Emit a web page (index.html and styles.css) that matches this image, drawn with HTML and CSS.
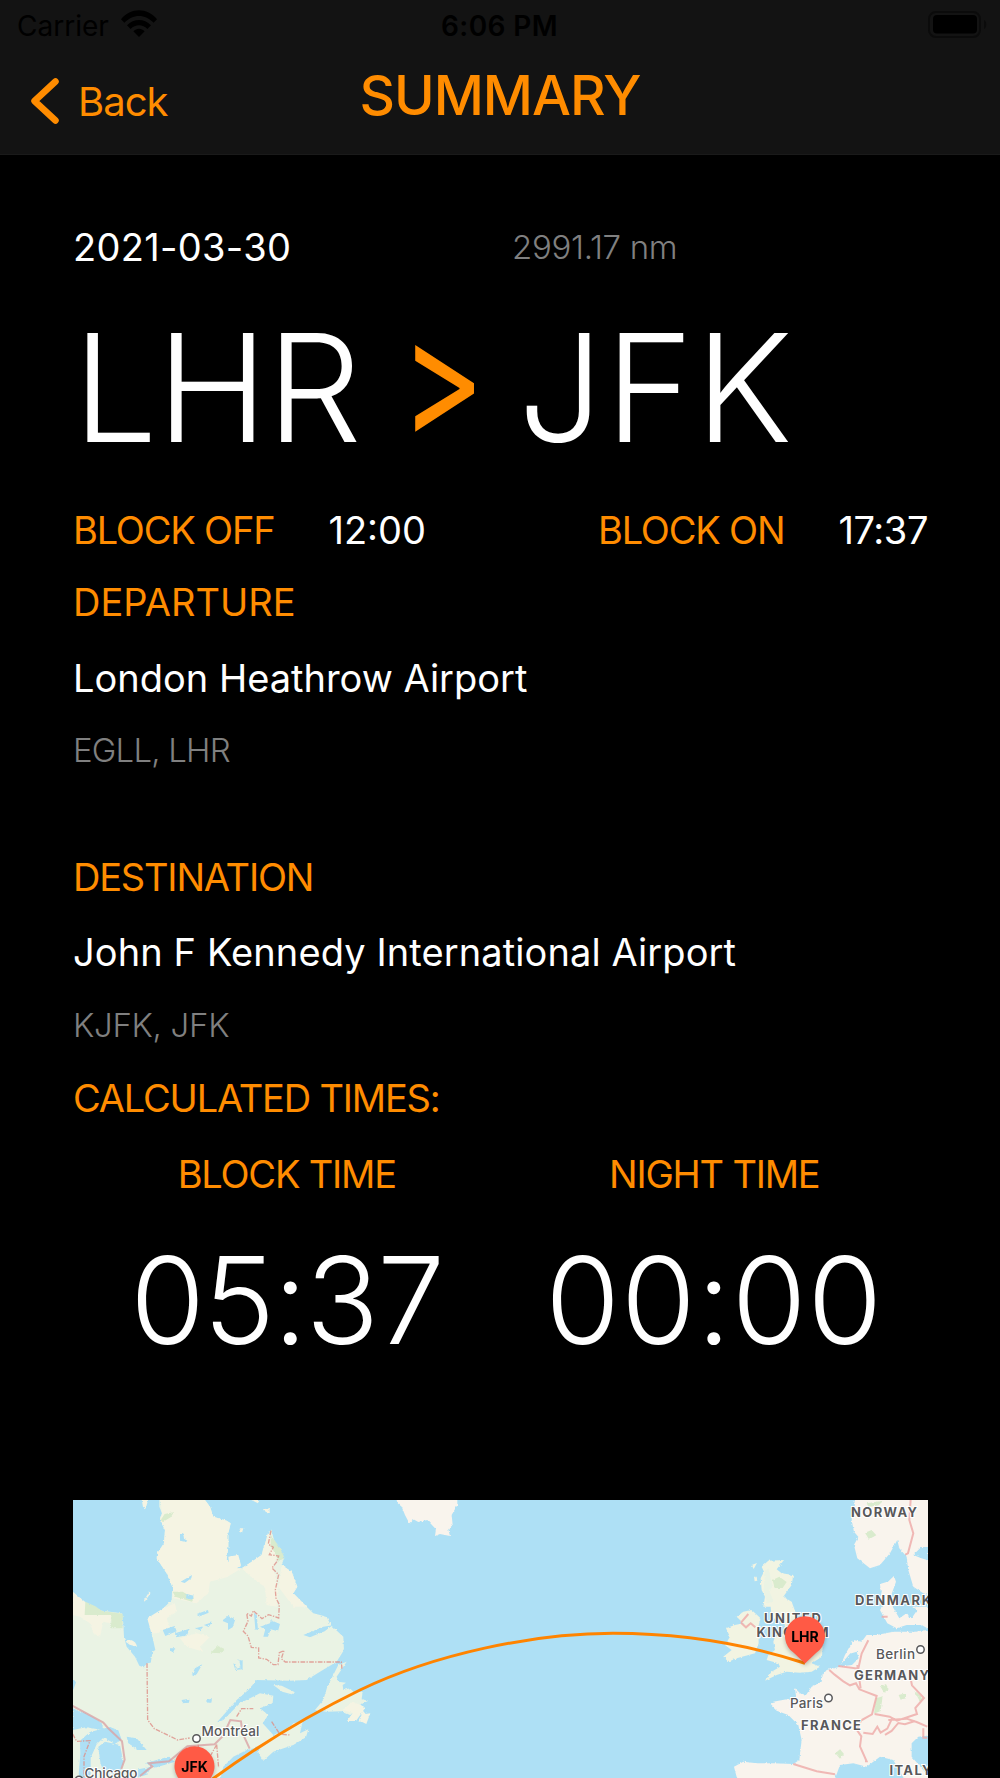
FILE: index.html
```html
<!DOCTYPE html>
<html lang="en">

<head>
  <meta charset="utf-8">
  <title>Summary</title>
  <link rel="stylesheet" href="styles.css">
</head>

<body>
  <header class="top">
    <div class="status">
      <div class="carrier">
        <span>Carrier</span>
        <svg width="36" height="27" viewBox="0 0 36 27">
          <path d="M0 9.2C10-2.6 26-2.6 36 9.2l-3.4 3.6C24.500 3.600 11.500 3.600 3.400 12.800z" />
          <path d="M6 15.300c6.800-7.200 17.200-7.200 24 0l-3.600 3.700c-4.800-5-12-5-16.800 0z" />
          <path d="M12.300 21.300c3.300-3.400 8.100-3.400 11.400 0L18 27z" />
        </svg>
      </div>
      <div class="clock">6:06 PM</div>
      <svg class="battery" width="54" height="27" viewBox="0 0 54 27">
        <rect class="shell" x="1" y="1" width="51" height="25" rx="7" />
        <rect x="5" y="4" width="44" height="18.500" rx="4" />
        <path class="cap" d="M56 9v9c3-1.500 3-7.500 0-9z" />
      </svg>
    </div>
    <div class="nav">
      <div class="back">
        <svg width="28" height="46" viewBox="0 0 28 46">
          <path d="M24.500 3.500L3.500 23l21 19.500" />
        </svg>
        <span>Back</span>
      </div>
      <h1 class="title">SUMMARY</h1>
    </div>
  </header>

  <main class="content">
    <div class="row date-row">
      <div class="value date">2021-03-30</div>
      <div class="muted distance">2991.17 nm</div>
    </div>

    <div class="route">
      <span class="from">LHR</span>
      <span class="arrow">&gt;</span>
      <span class="to">JFK</span>
    </div>

    <div class="row block-row">
      <div class="pair">
        <span class="label tight">BLOCK OFF</span>
        <span class="value">12:00</span>
      </div>
      <div class="pair">
        <span class="label tight">BLOCK ON</span>
        <span class="value block-on">17:37</span>
      </div>
    </div>

    <section class="airport departure">
      <h2 class="label">DEPARTURE</h2>
      <p class="value">London Heathrow Airport</p>
      <p class="muted egll">EGLL, LHR</p>
    </section>

    <section class="airport destination">
      <h2 class="label tight">DESTINATION</h2>
      <p class="value kennedy">John F Kennedy International Airport</p>
      <p class="muted">KJFK, JFK</p>
    </section>

    <h2 class="label tight calculated">CALCULATED TIMES:</h2>
    <div class="times">
      <div class="time">
        <h3 class="label tight">BLOCK TIME</h3>
        <div class="big">05:37</div>
      </div>
      <div class="time">
        <h3 class="label tight">NIGHT TIME</h3>
        <div class="big zero">00:00</div>
      </div>
    </div>

    <svg class="map" width="855" height="278" viewBox="0 0 855 278">
      <defs>
        <filter id="coast" x="0" y="0" width="100%" height="100%">
          <feTurbulence type="fractalNoise" baseFrequency="0.12" numOctaves="3" seed="4" />
          <feDisplacementMap in="SourceGraphic" scale="8" xChannelSelector="R" yChannelSelector="G" />
        </filter>
      </defs>

      <!-- North America -->
      <g transform="translate(-13 -10) scale(.3333)">
        <g filter="url(#coast)">
          <path class="forest" d="M20 290L38 305 60 330 100 350 125 362 185 370 190 400 192 440 200 470 225 500 238 527 250 532 262 520 272 518 278 485 286 480 275 430 270 405 262 385 285 375 310 355 335 330 337 290 320 250 290 205 292 190 312 160 315 120 300 90 306 70 298 50V10H420L450 50 460 80 500 92 512 100 505 130 505 170 500 210 525 235 545 235 570 220 605 195 612 165 625 155 625 125 635 122 642 150 672 205 665 225 695 245 712 290 700 310 740 350 760 370 800 380 812 405 850 440 852 480 830 515 780 545 740 570 690 572 590 570 565 600 530 630 470 698 490 690 540 640 600 610 640 617 638 640 600 655 625 675 608 700 640 735 680 722 700 700 728 695 720 730 745 718 738 742 700 765 640 785 610 812 595 790 600 770 560 780 520 800 490 830 478 880H20z" />
          <path class="cream" d="M298 10H420L450 50 460 80 500 92 512 100 505 130 505 170 500 210 525 235 545 235 500 262 450 275 445 310 410 340 340 325 337 290 320 250 290 205 292 190 312 160 315 120 300 90 306 70zM262 385L310 355 345 340 350 365 320 385 330 410 290 430 274 430zM38 305L75 335 110 365 155 375 150 400 130 395 120 440 100 430 90 400 60 380 38 375zM360 445L410 430 450 440 420 470 430 485 380 470zM545 235L605 195 625 125 650 200 640 235 655 300 650 350 620 345 615 290 590 275zM665 225L695 245 712 290 700 310 740 350 700 350 655 290z" />
          <path class="cream" d="M245 28h20l-8 28-8-6zM612 58l16-4 2 14-10 2zM540 115l10 0-4 14-8-4zM505 200l30-5 8 30-15 12-20-8zM570 28h28l-4 12z" />
          <path class="cream" d="M197 455c10-10 30-5 34 15l-22-6zM268 305l4 4-18 26-2-4z" />
          <path class="forest" d="M860 515L835 525 802 590 790 630 765 660 800 665 845 664 870 675 880 668 862 692 880 692 905 668 912 650 900 645 925 632 905 628 908 605 880 605 870 595 850 600 848 585 858 578 835 575 830 560zM640 585l25 2 40 20-10 6-28-8z" />
          <path class="cream" d="M848 660l30-25 24 10 14 8-28 40-26 0 16-24zM895 694l14-32 8 10 14-2-12 32-12-6z" />
          <path class="park" d="M76 335l30 14 20 14 62 8v44h-34v-40H74zM302 90l12-18 28-6-10 16-24 14zM338 305l30 0 34 20-6 10-50-15zM452 488l22-20 22 10-14 12zM632 135l28 38 14 32-18 8-12-25-12-20z" />
        </g>
        <g class="lakes" filter="url(#coast)">
          <path d="M38 655l60 25 30 22 0 18-50-8-40 8zM38 565l10 12-8 22h-10zM60 752l30-26 60-15 25 10 10 28-20 12-35-18-20 20-18 40 0 50-22 25-14-25 5-60zM115 770l20-15 45 10 10 50-10 30-25 12-6-20-20 10-8-30zM200 740l30 5 30 35-25 0-30-20zM255 820l70-20 20 15-60 18zM235 838l40-8-15 24-30 10z" />
          <path d="M360 130l10 0 2 16 10 6-4 4-18-4zM362 275l34-20-2 10-20 14zM410 372l34-12 2 8-24 10zM308 420l36-12 6 16-34 14zM345 430l44-14-8 20-32 6zM405 415l26-6-10 12zM432 405l24-8-10 14zM486 392l18-14 22 10-8 24-14 8 0-20zM395 555l10-20 22-12-16 28-8 8zM520 520l8 4-2 14 16-6-4-20-8-4 18 4 0 26-22 2zM365 630l24-4-2 12-20 2zM438 628l18 0-2 10-12 0zM328 475l18 0-8 14zM380 312l22 5-4 12-20-4zM582 370l8 0 4 50-8-2zM600 410l30-10 2-10 28 12-6 22-22-6-8 22-14 0 6-22zM730 435l60-25 28-4-24 18-44 18z" />
        </g>
        <path class="border" d="M38 648l92 50 14 16 42 40 8 55-10 28M240 858l22-18 15-10-10-10 60-6 55-45 82-6 25-25 22-48 32 4 4 34 22 48" />
        <path class="line" d="M633 122l-8 40 15 10-12 22 28 4-6 18-14 18 20 20-10 46 2 24 10 20-2 40-30-10-20 12-26-24-6 16-14-8 4 24-14 30 14 14 10 34 22 2 0 30 24 4 20 16h14l4-36 14-6-8 24 12 10h168l2 20M261 520l2 170 20 26 70 34 36-6M38 732l12 22 40-2-18 48v64M415 764l0 20M470 764l6 70M470 764l-20 36-20 10M530 680l15-24h35M635 695l25 38 32 2" />
      </g>

      <!-- Greenland -->
      <g transform="translate(267 -10) scale(.3333)" filter="url(#coast)">
        <path class="land" d="M165 10H352V45L335 75 338 105 325 118 330 138 300 132 285 138 288 118 262 90 235 96 220 88 208 100 195 75 185 50 172 38z" />
      </g>

      <!-- Europe -->
      <g transform="translate(567 -10) scale(.3333)">
        <g filter="url(#coast)">
          <path class="land" d="M642 10L645 50 635 90 642 125 655 140 642 165 652 205 690 235 720 225 750 190 772 150 778 175 800 200 805 240 820 290 850 310 880 320V10z" />
          <path class="land" d="M880 425L845 405 800 405 770 415 742 400 720 360 732 345 722 320 728 290 762 258 768 275 752 320 772 325 758 350 778 385 800 370 815 385 832 360 818 350 860 350 880 350zM720 282l40-12-10 18-28 14z" />
          <path class="land" d="M880 425L860 420 825 425 760 425 710 435 680 435 665 455 640 450 615 495 600 530 560 540 548 555 545 575 515 590 498 615 480 610 465 595 470 632 440 628 400 635 392 645 410 662 445 675 475 705 485 750 478 810 460 822 400 820 350 820 310 815 282 830 295 880H580L600 825 640 820 680 830 720 800 760 810 800 880H880L850 840 815 800 815 760 835 740 880 735z" />
          <path class="uk" d="M385 212L432 210 410 238 425 250 460 255 455 285 430 320 455 335 466 365 470 400 500 430 508 460 548 470 546 500 515 520 540 530 515 545 480 548 440 545 410 555 375 572 395 545 420 530 415 520 380 510 385 495 405 480 400 455 405 440 440 430 430 390 395 385 392 350 370 350 375 320 365 300 362 265 372 245 365 230z" />
          <path class="uk" d="M310 365L335 360 362 385 355 410 356 460 345 490 290 505 265 515 250 500 275 480 255 465 270 440 258 415 285 405 310 400 290 380zM335 225l16-6-10 18zM342 260l8 0 2 12-8 2z" />
          <path class="forest" d="M375 245l10-10 12 50-8 20 12 30-20 5-10-40z" />
          <path class="park" d="M398 270l20-10 22 16-12 18-24 0zM675 128l20-8 14 16-22 12zM680 40l50-8-14 14-30 5zM722 590l16-8 8 16-14 10zM776 615l22-6 0 16-16 4zM586 790l14-12 12 14-12 14zM708 625l20-6-6 44-20 8zM822 600l28 25-10 10z" />
          <path class="water" d="M820 195l24-24 20 0v40l-20-6zM596 530l40-5 20-20-6-20-20 6zM805 372l12 0 2 12-12 0z" />
        </g>
        <path class="border thin" d="M812 30l-4 60 12 40-16 60-8 4M303 398l22-26M303 398l15 14 14-12 14 12M725 380h18M595 528l60 8 10-45 20-40M568 540l16 14 26 20 20 12 18-6 10 18 52 20-14 55-32 18-14 28 14 20-4 30 20 45-5 0M652 525l10 70M704 672l45 8 22 12 60-20-5-18 26-30-36-38-4-20M745 690l55-4 30 10 32 14M670 728l28 4 14-22 10 18 20-12 14-30M735 735l20-12 20-24 20 4 30-10M850 715v28h12M460 822l70 22 55 9" />
      </g>

      <g class="labels">
        <text x="778" y="16.500" textLength="66">NORWAY</text>
        <text x="782" y="104.500" textLength="76">DENMARK</text>
        <text x="691" y="122.500" textLength="57">UNITED</text>
        <text x="683.500" y="136.500" textLength="72">KINGDOM</text>
        <text x="781" y="179.500" textLength="75">GERMANY</text>
        <text x="728" y="229.500" textLength="60">FRANCE</text>
        <text x="816.500" y="275" textLength="42">ITALY</text>
        <text class="city" x="803" y="159" textLength="39">Berlin</text>
        <text class="city" x="717" y="207.500" textLength="33">Paris</text>
        <text class="city" x="128.500" y="236" textLength="58">Montréal</text>
        <text class="city" x="11.500" y="278" textLength="53">Chicago</text>
      </g>
      <g class="dots">
        <circle cx="847.500" cy="149.500" r="3.700" />
        <circle cx="755.500" cy="198" r="3.700" />
        <circle cx="123.500" cy="238.500" r="3.700" />
        <circle cx="6" cy="280" r="3.700" />
      </g>

      <path class="flight" d="M122 292L141 278C185 246 240 213 287 190 362 154 460 133.300 540 133.300 605 133.300 670 143 732 163.300" />

      <g class="pin">
        <path d="M732 163.500l-11-10.500a20 20 0 1 1 22 0z" />
        <text x="732" y="142">LHR</text>
      </g>
      <g class="pin">
        <path d="M121.500 293.500l-11-10.500a20 20 0 1 1 22 0z" />
        <text x="121.500" y="272">JFK</text>
      </g>
    </svg>
  </main>
</body>

</html>
```
FILE: styles.css
```css
* {
  box-sizing: border-box;
}

body {
  margin: 0;
  width: 1000px;
  height: 1778px;
  overflow: hidden;
  background: #000;
  color: #fff;
  font-family: Inter, "Open Sans", sans-serif;
}

h1, h2, h3, p {
  margin: 0;
  font-weight: 400;
}

svg {
  display: block;
}

/* top bar */
.top {
  height: 155px;
  background: #131313;
  border-bottom: 1px solid #1a1a1a;
}

.status {
  display: grid;
  grid-template-columns: 1fr auto 1fr;
  align-items: center;
  height: 51px;
  padding: 0 18px 0 17px;
  color: #000;
  font-size: 28px;
}

.carrier {
  display: flex;
  gap: 12px;
  align-items: center;
}

.carrier svg {
  margin-bottom: 4px;
}

.clock {
  font-weight: 600;
  letter-spacing: .4px;
}

.battery {
  justify-self: end;
  margin-bottom: 2px;
  overflow: visible;
}

.battery .shell {
  fill: none;
  stroke: #0b0b0b;
  stroke-width: 2;
}

.battery .cap {
  fill: #0b0b0b;
}

.nav {
  display: grid;
  grid-template-columns: 1fr auto 1fr;
  padding: 0 31px;
  color: #ff8c00;
}

.back {
  display: flex;
  gap: 19px;
  align-items: center;
  height: 100px;
  font-size: 40px;
  letter-spacing: -1px;
}

.back path {
  fill: none;
  stroke: #ff8c00;
  stroke-width: 6.500;
  stroke-linecap: round;
  stroke-linejoin: round;
}

.title {
  font-size: 55px;
  font-weight: 450;
  line-height: 89px;
  letter-spacing: -1px;
}

/* flight data */
.content {
  padding: 61px 72px 0 73px;
}

.row {
  display: flex;
  justify-content: space-between;
}

.label {
  color: #ff8c00;
  font-size: 38px;
}

.label.tight {
  letter-spacing: -1.200px;
}

.value {
  font-size: 38px;
}

.muted {
  color: #808080;
  font-size: 33px;
  font-weight: 300;
  letter-spacing: -.300px;
}

.muted.egll {
  letter-spacing: -.800px;
}

.date {
  letter-spacing: .300px;
}

.kennedy {
  letter-spacing: .100px;
}

.date-row {
  display: grid;
  grid-template-columns: 1fr 1fr;
  column-gap: 23px;
  line-height: 62px;
}

.route {
  display: flex;
  height: 220px;
  line-height: 220px;
  font-size: 150px;
  font-weight: 300;
}

.from {
  letter-spacing: -1px;
}

.to {
  letter-spacing: 2px;
}

.arrow {
  margin: 0 26px 0 32px;
  color: #ff8c00;
  font-weight: 400;
  transform: translateY(-12px) scale(.85, 1.1);
}

.block-row {
  line-height: 64px;
}

.pair {
  display: flex;
  gap: 54px;
}

.block-on {
  letter-spacing: -.400px;
}

.airport .label {
  line-height: 71px;
}

.departure .label {
  line-height: 80px;
}

.departure p {
  line-height: 72px;
}

.destination {
  margin-top: 56px;
}

.destination .value {
  line-height: 78px;
}

.destination .muted {
  line-height: 68px;
}

.calculated {
  line-height: 78px;
}

.times {
  display: grid;
  grid-template-columns: 1fr 1fr;
  text-align: center;
}

.times .label {
  line-height: 74px;
}

.big {
  font-size: 121px;
  font-weight: 300;
  line-height: 178px;
  letter-spacing: -1.700px;
}

.big.zero {
  letter-spacing: 1px;
}

/* map */
.map {
  margin-top: 111px;
  background: #aee0f5;
}

.forest {
  fill: #eaf3e4;
}

.cream {
  fill: #f5f4e3;
}

.land {
  fill: #f9f4ed;
}

.uk {
  fill: #f2f4e2;
}

.park {
  fill: #d9ebcd;
}

.water, .lakes {
  fill: #aee0f5;
}

.border, .line {
  fill: none;
  stroke: #d9a3a5;
  stroke-width: 6;
  opacity: .8;
}

.border.thin {
  stroke: #eda9a6;
}

.line {
  stroke: #dd8f87;
  stroke-width: 4;
  stroke-dasharray: 14 4 4 4;
}

.labels text {
  fill: #58585a;
  stroke: #fff;
  stroke-width: 2;
  paint-order: stroke;
  font-size: 13px;
  font-weight: 700;
}

.labels .city {
  font-size: 13.500px;
  font-weight: 500;
}

.dots circle {
  fill: #fff;
  stroke: #58585a;
  stroke-width: 1.500;
}

.flight {
  fill: none;
  stroke: #ff8400;
  stroke-width: 3;
}

.pin {
  filter: drop-shadow(0 2px 2px rgba(0, 0, 0, .25));
}

.pin path {
  fill: #ff5a45;
}

.pin text {
  font-size: 14px;
  font-weight: 700;
  text-anchor: middle;
}
```
